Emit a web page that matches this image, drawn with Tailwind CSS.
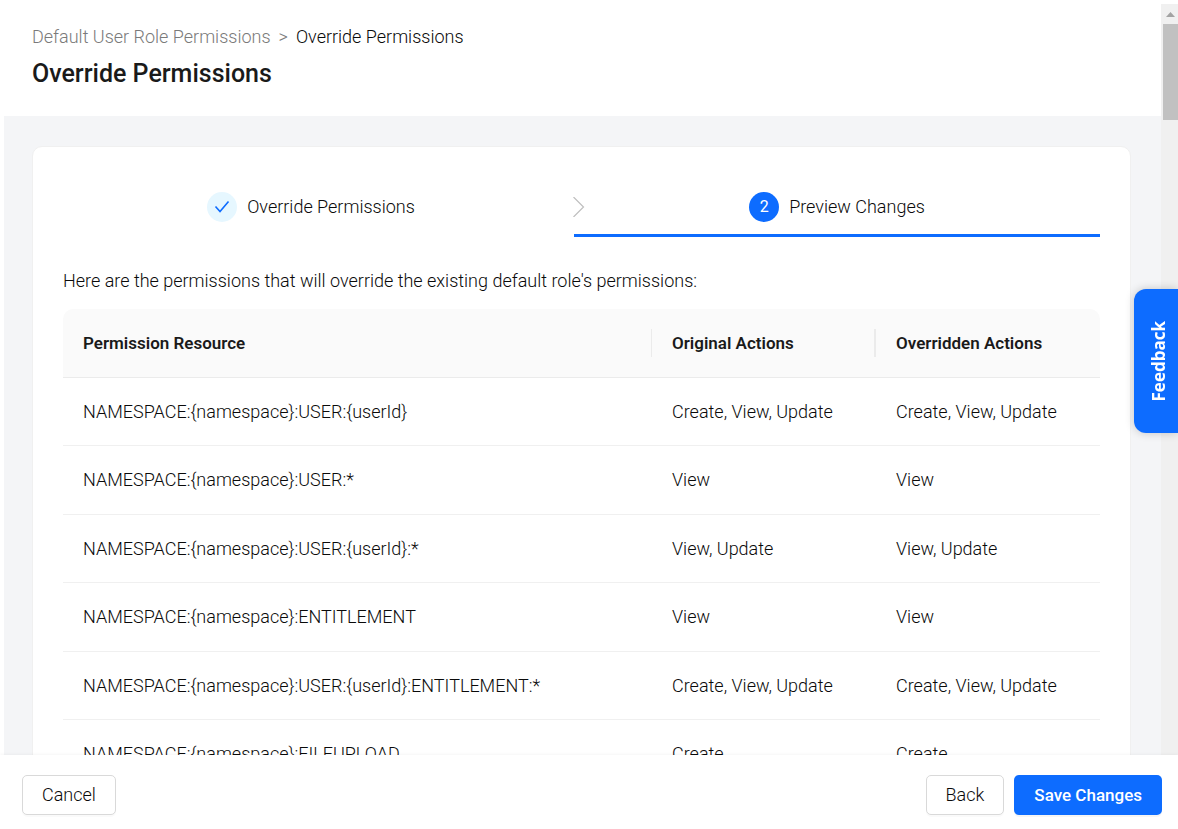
<!DOCTYPE html>
<html lang="en">
<head>
<meta charset="utf-8">
<meta name="viewport" content="width=device-width, initial-scale=1">
<title>Override Permissions</title>
<script src="https://cdn.jsdelivr.net/npm/@tailwindcss/browser@4"></script>
</head>
<body class="flex h-screen flex-col overflow-hidden bg-white font-[Roboto,sans-serif] text-lg leading-7 font-light text-[#0a0a0a]">
  <div class="flex min-h-0 flex-1 pt-1 pl-1">
    <div class="flex min-w-0 flex-1 flex-col overflow-hidden">
      <header class="h-28 shrink-0 pt-[19px] pl-7">
        <nav aria-label="Breadcrumb">
          <ol class="flex gap-2">
            <li><a href="#" class="text-[#7a7a7a]">Default User Role Permissions</a></li>
            <li aria-hidden="true" class="text-[#7a7a7a]">&gt;</li>
            <li aria-current="page">Override Permissions</li>
          </ol>
        </nav>
        <h1 class="mt-2 text-[25px] leading-[30px] font-medium text-[#1a1a1a]">Override Permissions</h1>
      </header>

      <main class="flex-1 bg-[#f4f5f7] pt-[30px] pr-[30px] pl-7">
        <section class="rounded-[10px] border border-[#f0f0f0] bg-white px-[30px] pt-[30px]">
          <ol class="-ml-[15px] flex">
            <li class="relative flex h-[60px] flex-1 items-center justify-center gap-[10px]">
              <span class="flex size-[30px] items-center justify-center rounded-full bg-[#e6f7ff]">
                <svg class="h-4 w-4" viewBox="0 0 16 16" fill="none" stroke="#0d6cff" stroke-width="1.6" aria-hidden="true"><path d="M1.5 7.5 6 12.5 14.5 2.5"/></svg>
              </span>
              <span>Override Permissions</span>
              <svg class="absolute top-[20px] -right-[11px] h-5 w-3" viewBox="0 0 12 20" fill="none" stroke="#bfbfbf" stroke-width="1.2" aria-hidden="true"><path d="M.5 0 10.5 10 .5 20"/></svg>
            </li>
            <li aria-current="step" class="relative flex h-[60px] flex-1 items-center justify-center gap-[10px]">
              <span class="flex size-[30px] items-center justify-center rounded-full bg-[#0d6cff] text-base font-normal text-white">2</span>
              <span>Preview Changes</span>
              <span class="absolute inset-x-0 bottom-0 h-[3px] bg-[#0d6cff]"></span>
            </li>
          </ol>
          <p class="mt-[30px]">Here are the permissions that will override the existing default role's permissions:</p>

          <table class="mt-[14px] w-full table-fixed border-separate border-spacing-0 text-left">
            <colgroup><col><col class="w-[224px]"><col class="w-[224px]"></colgroup>
            <thead class="text-[17px] text-[#1a1a1a]">
              <tr class="h-[69px]">
                <th scope="col" class="rounded-tl-[10px] border-b border-[#ebebeb] bg-[#fafafa] p-0 font-semibold"><div class="border-r border-[#ebebeb] pl-5">Permission Resource</div></th>
                <th scope="col" class="border-b border-[#ebebeb] bg-[#fafafa] p-0 font-semibold"><div class="border-r-2 border-[#ebebeb] pl-5">Original Actions</div></th>
                <th scope="col" class="rounded-tr-[10px] border-b border-[#ebebeb] bg-[#fafafa] p-0 pl-5 font-semibold">Overridden Actions</th>
              </tr>
            </thead>
            <tbody class="[&_td]:border-b [&_td]:border-[#f0f0f0] [&_td]:p-0 [&_td]:pl-5">
              <tr class="h-[68px]"><td>NAMESPACE:{namespace}:USER:{userId}</td><td>Create, View, Update</td><td>Create, View, Update</td></tr>
              <tr class="h-[69px]"><td>NAMESPACE:{namespace}:USER:*</td><td>View</td><td>View</td></tr>
              <tr class="h-[68px]"><td>NAMESPACE:{namespace}:USER:{userId}:*</td><td>View, Update</td><td>View, Update</td></tr>
              <tr class="h-[69px]"><td>NAMESPACE:{namespace}:ENTITLEMENT</td><td>View</td><td>View</td></tr>
              <tr class="h-[68px]"><td>NAMESPACE:{namespace}:USER:{userId}:ENTITLEMENT:*</td><td>Create, View, Update</td><td>Create, View, Update</td></tr>
              <tr class="h-[69px]"><td>NAMESPACE:{namespace}:FILEUPLOAD</td><td>Create</td><td>Create</td></tr>
            </tbody>
          </table>
        </section>
      </main>
    </div>

    <!-- Scroll track -->
    <div class="flex w-[17px] flex-col bg-[#f0f0f0] pl-[2px]" aria-hidden="true">
      <div class="flex h-5 shrink-0 items-center justify-center">
        <svg class="h-[5px] w-[9px]" viewBox="0 0 9 5" fill="#a3a3a3"><path d="M0 5 4.5 0 9 5z"/></svg>
      </div>
      <div class="h-24 bg-[#c1c1c1]"></div>
    </div>
  </div>

  <footer class="relative flex h-[74px] shrink-0 items-start gap-[10px] bg-white pt-5 pr-4 pl-[22px] shadow-[0_-1px_3px_rgba(0,0,0,0.04)]">
    <button type="button" class="mr-auto h-10 rounded-[5px] border border-[#d9d9d9] bg-white px-[19px] shadow-[0_2px_0_rgba(0,0,0,0.02)]">Cancel</button>
    <button type="button" class="h-10 rounded-[5px] border border-[#d9d9d9] bg-white px-[19px] shadow-[0_2px_0_rgba(0,0,0,0.02)]">Back</button>
    <button type="button" class="h-10 rounded-[5px] bg-[#0d6cff] px-5 text-[17px] font-medium text-white shadow-[0_2px_0_rgba(0,0,0,0.04)]">Save Changes</button>
  </footer>

  <button type="button" class="fixed top-[289px] right-0 flex h-36 w-11 items-center justify-center rounded-l-xl bg-[#0d6cff] pl-[6px] font-['Open_Sans',sans-serif] text-[17px] font-bold text-white shadow-[0_0_10px_rgba(0,0,0,0.2)]">
    <span class="rotate-180 [writing-mode:vertical-rl]">Feedback</span>
  </button>
</body>
</html>
